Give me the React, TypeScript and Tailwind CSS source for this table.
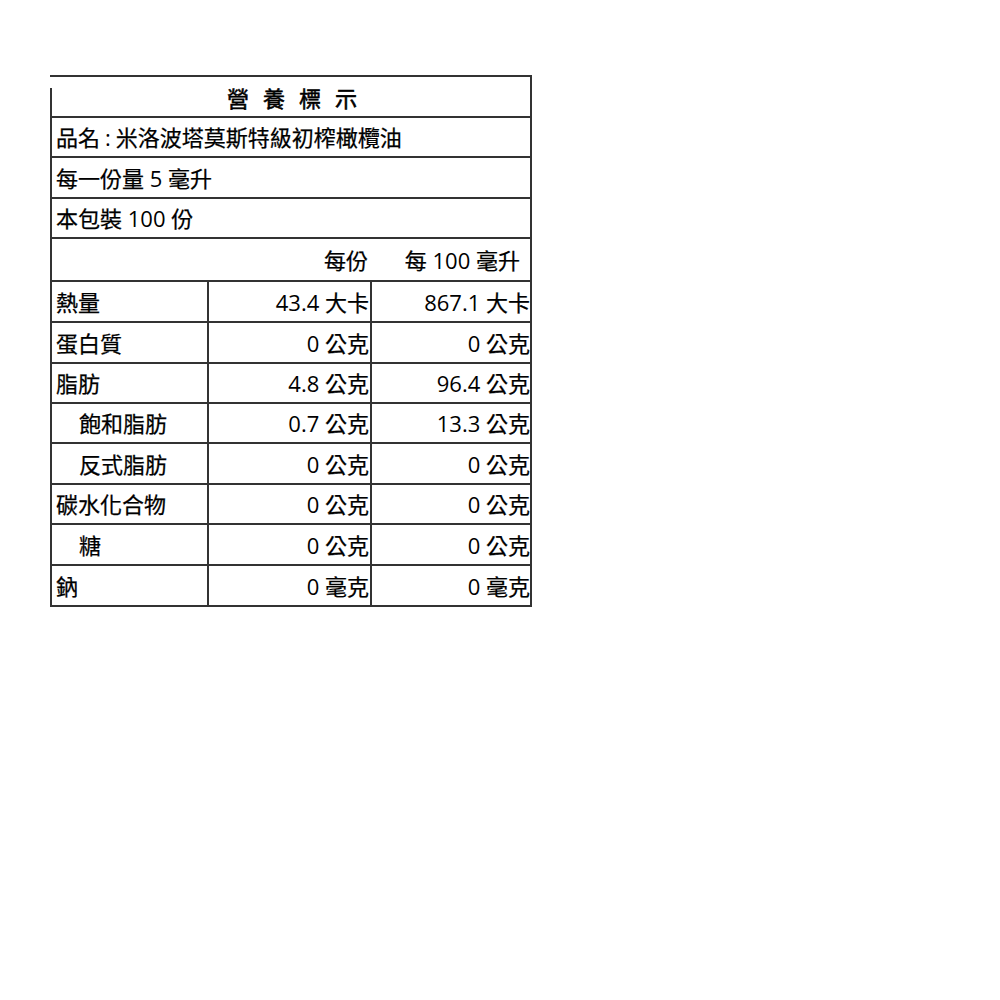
import React from "react";

const font = { fontFamily: '"Open Sans", "Noto Sans CJK TC", sans-serif' };

type Row = { label: string; indent?: boolean; a: string; b: string; h: string };

const rows: Row[] = [
  { label: "熱量", a: "43.4 大卡", b: "867.1 大卡", h: "h-[41px]" },
  { label: "蛋白質", a: "0 公克", b: "0 公克", h: "h-[41px]" },
  { label: "脂肪", a: "4.8 公克", b: "96.4 公克", h: "h-[40px]" },
  { label: "飽和脂肪", indent: true, a: "0.7 公克", b: "13.3 公克", h: "h-[40px]" },
  { label: "反式脂肪", indent: true, a: "0 公克", b: "0 公克", h: "h-[41px]" },
  { label: "碳水化合物", a: "0 公克", b: "0 公克", h: "h-[40px]" },
  { label: "糖", indent: true, a: "0 公克", b: "0 公克", h: "h-[41px]" },
  { label: "鈉", a: "0 毫克", b: "0 毫克", h: "h-[41px]" },
];

function Mixed({ text }: { text: string }) {
  const parts = text.split(/([0-9.]+)/);
  return (
    <span className="whitespace-pre">
      {parts.map((p, i) =>
        /^[0-9.]+$/.test(p) ? (
          <span key={i} className="[-webkit-text-stroke:0px]">
            {p}
          </span>
        ) : (
          <span key={i}>{p}</span>
        )
      )}
    </span>
  );
}

export default function App() {
  return (
    <div className="min-h-[1000px] w-[1000px] bg-white pt-[75px] pl-[50px]" style={font}>
      <div className="w-[482px] border-t-2 border-[#333] text-[22px] font-normal leading-none text-black [-webkit-text-stroke:0.25px_black]">
        {/* title */}
        <div className="flex h-[41px] border-b-2 border-r-2 border-[#333]">
          <div className="mt-[11px] w-0 border-l-2 border-[#333]" />
          <div className="flex flex-1 items-center justify-center gap-[14px] pt-[3px] pl-[2px] [-webkit-text-stroke:0.55px_black]">
            <span>營</span>
            <span>養</span>
            <span>標</span>
            <span>示</span>
          </div>
        </div>
        <div className="flex h-[40px] items-center border-x-2 border-b-2 border-[#333] pl-[4px]">
          <span>
            品名<span className="mx-[5px] [-webkit-text-stroke:0px]">:</span>米洛波塔莫斯特級初榨橄欖油
          </span>
        </div>
        <div className="flex h-[41px] items-center border-x-2 border-b-2 border-[#333] pl-[4px]">
          <Mixed text="每一份量 5 毫升" />
        </div>
        <div className="flex h-[40px] items-center border-x-2 border-b-2 border-[#333] pl-[4px]">
          <Mixed text="本包裝 100 份" />
        </div>
        <div className="flex h-[43px] items-center border-x-2 border-b-2 border-[#333]">
          <div className="w-[157px]" />
          <div className="w-[163px] pr-[4px] text-right">每份</div>
          <div className="flex-1 pr-[10px] text-right">
            <Mixed text="每 100 毫升" />
          </div>
        </div>
        {rows.map((r) => (
          <div key={r.label} className={`flex ${r.h} border-x-2 border-b-2 border-[#333]`}>
            <div
              className={`flex w-[157px] items-center border-r-2 border-[#333] ${
                r.indent ? "pl-[27px]" : "pl-[4px]"
              }`}
            >
              {r.label}
            </div>
            <div className="flex w-[163px] items-center justify-end border-r-2 border-[#333] pr-[1px]">
              <Mixed text={r.a} />
            </div>
            <div className="flex flex-1 items-center justify-end pr-0">
              <Mixed text={r.b} />
            </div>
          </div>
        ))}
      </div>
    </div>
  );
}
